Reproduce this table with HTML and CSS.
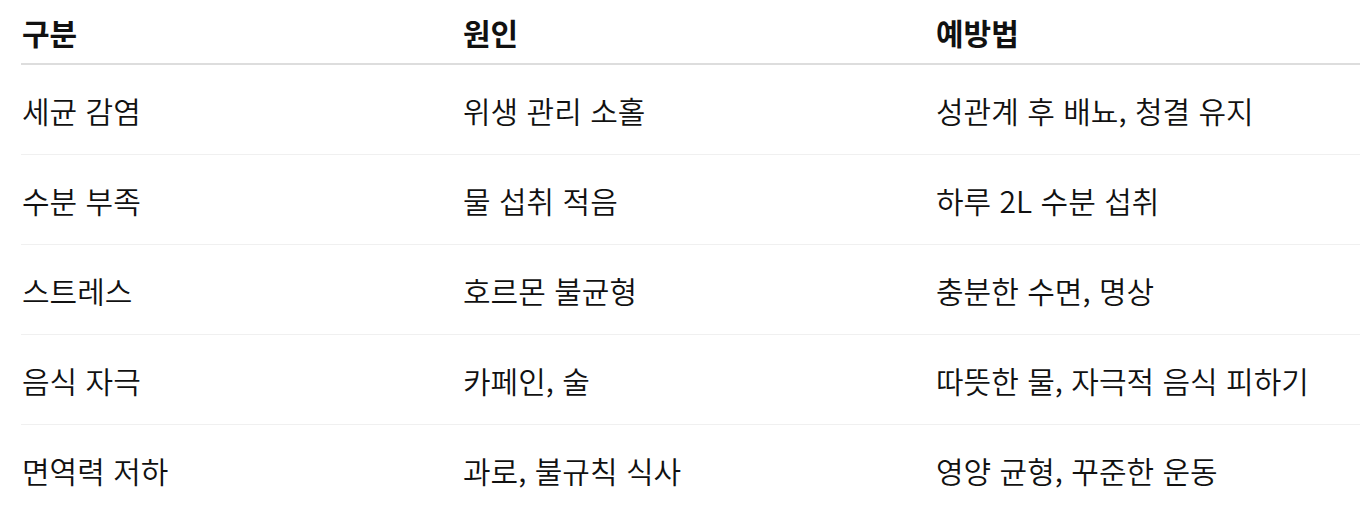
FILE: index.html
```html
<!DOCTYPE html>
<html lang="ko">
<head>
<meta charset="utf-8">
<link rel="stylesheet" href="styles.css">
</head>
<body>
<div class="wrap">
<table class="tbl">
  <colgroup>
    <col class="c1"><col class="c2"><col class="c3">
  </colgroup>
  <thead>
    <tr><th>구분</th><th>원인</th><th>예방법</th></tr>
  </thead>
  <tbody>
    <tr><td>세균 감염</td><td>위생 관리 소홀</td><td>성관계 후 배뇨, 청결 유지</td></tr>
    <tr><td>수분 부족</td><td>물 섭취 적음</td><td>하루 2L 수분 섭취</td></tr>
    <tr><td>스트레스</td><td>호르몬 불균형</td><td>충분한 수면, 명상</td></tr>
    <tr><td>음식 자극</td><td>카페인, 술</td><td>따뜻한 물, 자극적 음식 피하기</td></tr>
    <tr><td>면역력 저하</td><td>과로, 불규칙 식사</td><td>영양 균형, 꾸준한 운동</td></tr>
  </tbody>
</table>
</div>
</body>
</html>
```
FILE: styles.css
```css
html, body {
  margin: 0;
  padding: 0;
  background: #fff;
}
body {
  font-family: "Noto Sans CJK KR", "Noto Sans", sans-serif;
  color: #1a1a1a;
  overflow: hidden;
}
.wrap {
  padding-left: 21px;
}
.tbl {
  border-collapse: collapse;
  table-layout: fixed;
  width: 1339px;
  font-size: 30px;
  line-height: 1.2;
}
.c1 { width: 441px; }
.c2 { width: 473px; }
.tbl th {
  text-align: left;
  font-weight: 700;
  height: 63px;
  padding: 0 0 0 1px;
  vertical-align: middle;
  border-bottom: 2px solid #dddddd;
  color: #111;
}
.tbl td {
  height: 89px;
  padding: 0 0 0 1px;
  vertical-align: middle;
  border-bottom: 1px solid #f0f0f0;
  font-weight: 350;
  color: #111;
}
```
